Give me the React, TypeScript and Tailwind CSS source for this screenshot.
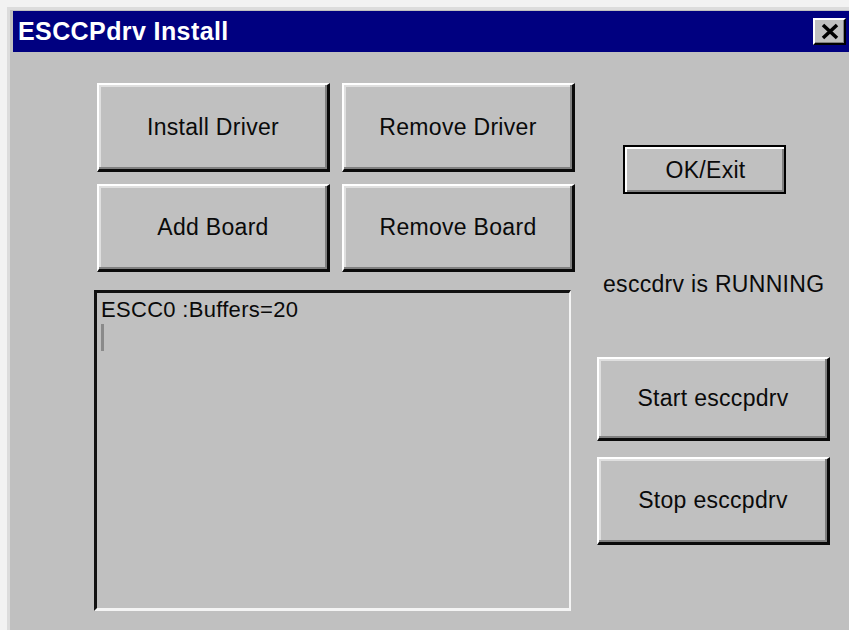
import React from "react";

const font = { fontFamily: '"Liberation Sans", Arial, sans-serif' };

function RaisedButton({
  label,
  className,
}: {
  label: string;
  className: string;
}) {
  return (
    <div
      className={
        "flex items-center justify-center bg-[#c0c0c0] border-t-2 border-l-2 border-b-[3px] border-r-[3px] border-t-white border-l-white border-b-[#0a0a0a] border-r-[#0a0a0a] shadow-[inset_-2px_-2px_0_#808080,inset_2px_2px_0_#dfdfdf] text-[23px] text-[#0a0a0a] tracking-[0.3px] " +
        className
      }
    >
      {label}
    </div>
  );
}

export default function App() {
  return (
    <div className="w-[849px] h-[630px] bg-[#f2f2f2] pt-[7px] pl-[7px] overflow-hidden" style={font}>
      <div className="w-[842px] h-[623px] border-t-[3px] border-l-[3px] border-t-[#dcdcdc] border-l-[#dcdcdc] bg-[#c0c0c0] pt-[1px] pl-[3px]">
        {/* title bar */}
        <div className="h-[41px] bg-[#000080] flex items-center justify-between pl-[5px] pr-[3px]">
          <span className="text-white font-bold text-[25px] tracking-[0.4px]">ESCCPdrv Install</span>
          <div className="w-[33px] h-[27px] bg-[#c0c0c0] border-t-2 border-l-2 border-b-2 border-r-2 border-t-white border-l-white border-b-black border-r-black shadow-[inset_-1px_-1px_0_#808080] flex items-center justify-center">
            <svg width="20" height="17" viewBox="0 0 20 17">
              <path d="M3 2 L17 15 M17 2 L3 15" stroke="#000" strokeWidth="3.6" />
            </svg>
          </div>
        </div>

        {/* dialog body */}
        <div className="flex pt-[31px] pl-[84px]">
          <div className="flex flex-col w-[478px]">
            <div className="grid grid-cols-[233px_233px] grid-rows-[89px_88px] gap-x-[12px] gap-y-[12px]">
              <RaisedButton label="Install Driver" className="" />
              <RaisedButton label="Remove Driver" className="" />
              <RaisedButton label="Add Board" className="" />
              <RaisedButton label="Remove Board" className="" />
            </div>
            <div className="mt-[18px] -ml-[3px] w-[477px] h-[321px] border-t-[3px] border-l-[3px] border-t-[#111] border-l-[#111] border-b-[3px] border-r-[2px] border-b-[#f4f4f4] border-r-[#f4f4f4] pl-[4px] pt-[6px]">
              <div className="text-[22px] leading-[22px] tracking-[0.3px] text-[#0a0a0a]">ESCC0 :Buffers=20</div>
              <div className="mt-[3px] w-[3px] h-[27px] bg-[#8a8a8a]" />
            </div>
          </div>

          <div className="flex flex-col ml-[22px] w-[233px] shrink-0">
            <div className="mt-[62px] ml-[26px] w-[163px] h-[49px] border-2 border-black">
              <div className="w-full h-full flex items-center justify-center bg-[#c0c0c0] border-t-2 border-l-2 border-t-white border-l-white shadow-[inset_-2px_-2px_0_#808080] text-[23px] tracking-[0.3px] text-[#0a0a0a]">
                OK/Exit
              </div>
            </div>
            <div className="mt-[77px] ml-[6px] text-[23px] leading-[26px] tracking-[0.3px] text-[#0a0a0a] whitespace-nowrap">
              esccdrv is RUNNING
            </div>
            <RaisedButton label="Start esccpdrv" className="mt-[60px] h-[84px] shrink-0" />
            <RaisedButton label="Stop esccpdrv" className="mt-[16px] h-[88px] shrink-0" />
          </div>
        </div>
      </div>
    </div>
  );
}
